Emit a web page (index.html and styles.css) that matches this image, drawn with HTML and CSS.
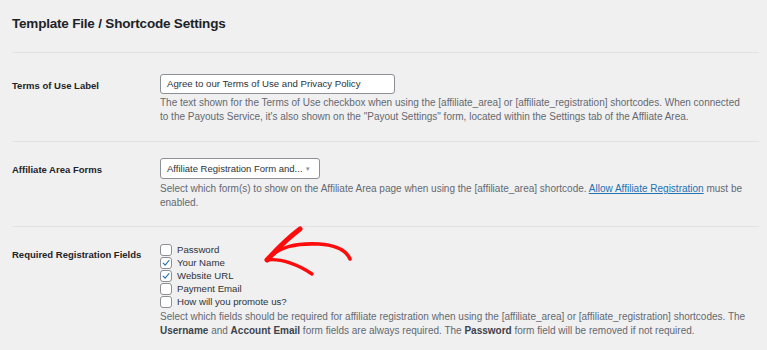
FILE: index.html
```html
<!DOCTYPE html>
<html>
<head>
<meta charset="utf-8">
<link rel="stylesheet" href="styles.css">
</head>
<body>
<div class="page">
  <h2 class="title">Template File / Shortcode Settings</h2>
  <div class="row row-first">
    <div class="label">Terms of Use Label</div>
    <div class="field">
      <div class="text-input">Agree to our Terms of Use and Privacy Policy</div>
      <p class="desc">The text shown for the Terms of Use checkbox when using the [affiliate_area] or [affiliate_registration] shortcodes. When connected to the Payouts Service, it's also shown on the "Payout Settings" form, located within the Settings tab of the Affliate Area.</p>
    </div>
  </div>
  <div class="row">
    <div class="label">Affiliate Area Forms</div>
    <div class="field">
      <div class="select"><span>Affiliate Registration Form and...</span><span class="caret">▾</span></div>
      <p class="desc desc-select">Select which form(s) to show on the Affiliate Area page when using the [affiliate_area] shortcode. <a href="#" class="link">Allow Affiliate Registration</a> must be enabled.</p>
    </div>
  </div>
  <div class="row row-last">
    <div class="label">Required Registration Fields</div>
    <div class="field">
      <ul class="checks">
        <li><span class="box"></span>Password</li>
        <li><span class="box checked"><svg viewBox="0 0 12 12" width="10" height="10"><path d="M2.6 6.2 L5 8.6 L9.6 3" fill="none" stroke="#2271b1" stroke-width="1.4" stroke-linecap="round" stroke-linejoin="round"/></svg></span>Your Name</li>
        <li><span class="box checked"><svg viewBox="0 0 12 12" width="10" height="10"><path d="M2.6 6.2 L5 8.6 L9.6 3" fill="none" stroke="#2271b1" stroke-width="1.4" stroke-linecap="round" stroke-linejoin="round"/></svg></span>Website URL</li>
        <li><span class="box"></span>Payment Email</li>
        <li><span class="box"></span>How will you promote us?</li>
      </ul>
      <p class="desc">Select which fields should be required for affiliate registration when using the [affiliate_area] or [affiliate_registration] shortcodes. The <b>Username</b> and <b>Account Email</b> form fields are always required. The <b>Password</b> form field will be removed if not required.</p>
    </div>
    <svg class="arrow" width="110" height="70" viewBox="0 0 110 70">
      <path d="M12 43 C 24 29, 42 26, 64 27 C 80 28, 91 33, 95 42" fill="none" stroke="#ff0b0b" stroke-width="3.6" stroke-linecap="round"/>
      <path d="M12 43 C 22 32, 33 21, 45 12" fill="none" stroke="#ff0b0b" stroke-width="5" stroke-linecap="round"/>
      <path d="M12 43 C 26 41, 44 48, 57 57" fill="none" stroke="#ff0b0b" stroke-width="3.4" stroke-linecap="round"/>
    </svg>
  </div>
</div>
</body>
</html>
```
FILE: styles.css
```css
html, body {
  margin: 0;
  padding: 0;
  background: #f0f0f1;
}
.page {
  padding: 14px 8px 0 12px;
  font-family: "Liberation Sans", Arial, sans-serif;
  color: #1d2327;
}
.title {
  margin: 0;
  font-size: 13.5px;
  letter-spacing: -0.2px;
  line-height: 20px;
  font-weight: 700;
  color: #1d2327;
  padding-bottom: 18px;
  border-bottom: 1px solid #e2e2e3;
}
.row {
  display: flex;
  padding: 16px 0 16px;
  border-bottom: 1px solid #e2e2e3;
  position: relative;
}
.row-first {
  padding-top: 21px;
  padding-bottom: 17px;
}
.row-last {
  border-bottom: none;
}
.label {
  width: 148px;
  flex: none;
  font-size: 9.5px;
  font-weight: 700;
  line-height: 14px;
  margin-top: 5px;
  color: #1d2327;
}
.field {
  flex: 1;
  min-width: 0;
}
.text-input {
  width: 221px;
  height: 18px;
  border: 1px solid #8c8f94;
  border-radius: 3px;
  background: #fff;
  font-size: 9.65px;
  line-height: 18px;
  padding: 0 6px;
  color: #2c3338;
}
.select {
  width: 143px;
  height: 19px;
  border: 1px solid #8c8f94;
  border-radius: 3px;
  background: #fff;
  font-size: 9.5px;
  line-height: 19px;
  padding: 0 9px 0 6px;
  color: #2c3338;
  display: flex;
  justify-content: space-between;
}
.caret {
  font-size: 7px;
  color: #8c8f94;
}
.desc {
  margin: 2px 0 0;
  font-size: 10px;
  line-height: 14px;
  color: #646970;
  max-width: 590px;
}
.desc b {
  color: #3c434a;
  font-weight: 700;
}
.desc-select {
  margin-top: 3px;
}
.link {
  color: #2271b1;
  text-decoration: underline;
}
.checks {
  list-style: none;
  margin: 0;
  padding: 0;
}
.checks li {
  display: flex;
  align-items: center;
  height: 13px;
  font-size: 9.65px;
  color: #2c3338;
}
.box {
  width: 10px;
  height: 10px;
  border: 1px solid #8c8f94;
  border-radius: 3px;
  background: #fff;
  margin-right: 5px;
  display: flex;
  align-items: center;
  justify-content: center;
  box-sizing: content-box;
}
.arrow {
  position: absolute;
  left: 243px;
  top: -10px;
}
```
